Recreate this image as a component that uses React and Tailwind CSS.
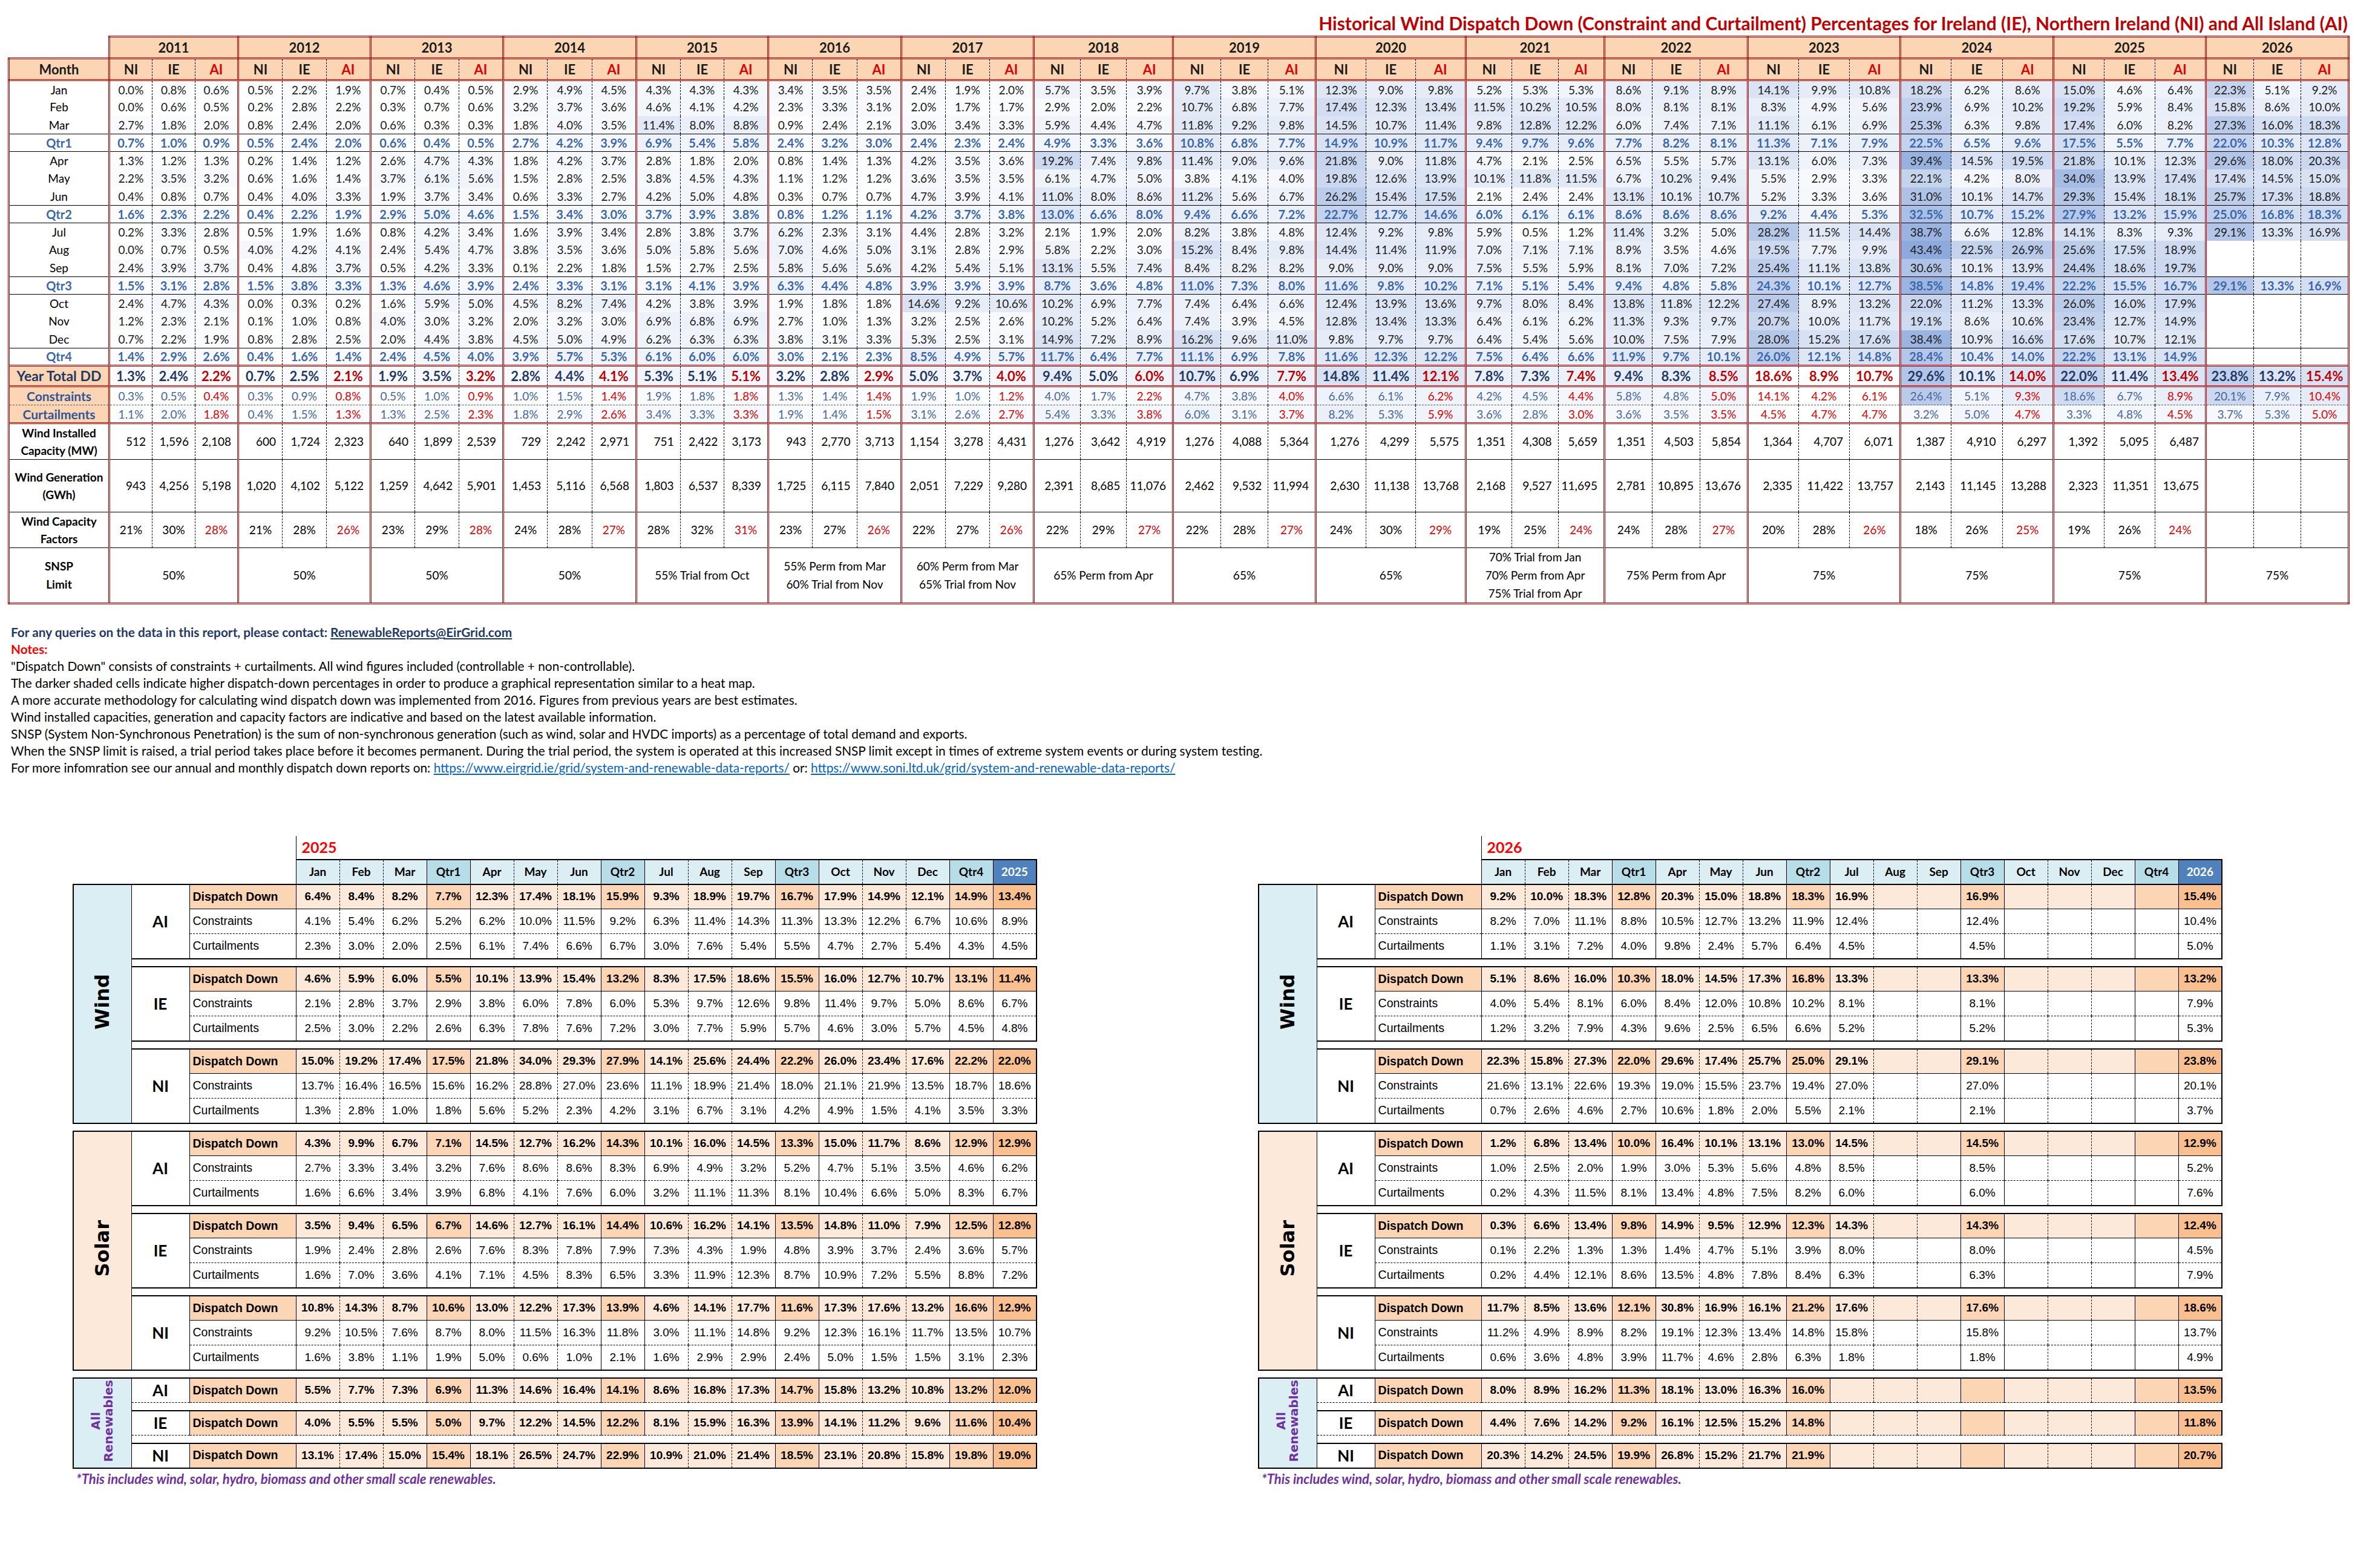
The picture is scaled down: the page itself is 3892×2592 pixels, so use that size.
import React from "react";

// top table: yearly dispatch-down history
const YEARS = [
  { y: 2011, w: "w-[213px]", v: "0.0 0.8 0.6|0.0 0.6 0.5|2.7 1.8 2.0|0.7 1.0 0.9|1.3 1.2 1.3|2.2 3.5 3.2|0.4 0.8 0.7|1.6 2.3 2.2|0.2 3.3 2.8|0.0 0.7 0.5|2.4 3.9 3.7|1.5 3.1 2.8|2.4 4.7 4.3|1.2 2.3 2.1|0.7 2.2 1.9|1.4 2.9 2.6|1.3 2.4 2.2|0.3 0.5 0.4|1.1 2.0 1.8", cap: "512 1,596 2,108", gen: "943 4,256 5,198", cf: "21 30 28", snsp: ["50%"] },
  { y: 2012, w: "w-[219px]", v: "0.5 2.2 1.9|0.2 2.8 2.2|0.8 2.4 2.0|0.5 2.4 2.0|0.2 1.4 1.2|0.6 1.6 1.4|0.4 4.0 3.3|0.4 2.2 1.9|0.5 1.9 1.6|4.0 4.2 4.1|0.4 4.8 3.7|1.5 3.8 3.3|0.0 0.3 0.2|0.1 1.0 0.8|0.8 2.8 2.5|0.4 1.6 1.4|0.7 2.5 2.1|0.3 0.9 0.8|0.4 1.5 1.3", cap: "600 1,724 2,323", gen: "1,020 4,102 5,122", cf: "21 28 26", snsp: ["50%"] },
  { y: 2013, w: "w-[219px]", v: "0.7 0.4 0.5|0.3 0.7 0.6|0.6 0.3 0.3|0.6 0.4 0.5|2.6 4.7 4.3|3.7 6.1 5.6|1.9 3.7 3.4|2.9 5.0 4.6|0.8 4.2 3.4|2.4 5.4 4.7|0.5 4.2 3.3|1.3 4.6 3.9|1.6 5.9 5.0|4.0 3.0 3.2|2.0 4.4 3.8|2.4 4.5 4.0|1.9 3.5 3.2|0.5 1.0 0.9|1.3 2.5 2.3", cap: "640 1,899 2,539", gen: "1,259 4,642 5,901", cf: "23 29 28", snsp: ["50%"] },
  { y: 2014, w: "w-[220px]", v: "2.9 4.9 4.5|3.2 3.7 3.6|1.8 4.0 3.5|2.7 4.2 3.9|1.8 4.2 3.7|1.5 2.8 2.5|0.6 3.3 2.7|1.5 3.4 3.0|1.6 3.9 3.4|3.8 3.5 3.6|0.1 2.2 1.8|2.4 3.3 3.1|4.5 8.2 7.4|2.0 3.2 3.0|4.5 5.0 4.9|3.9 5.7 5.3|2.8 4.4 4.1|1.0 1.5 1.4|1.8 2.9 2.6", cap: "729 2,242 2,971", gen: "1,453 5,116 6,568", cf: "24 28 27", snsp: ["50%"] },
  { y: 2015, w: "w-[218px]", v: "4.3 4.3 4.3|4.6 4.1 4.2|11.4 8.0 8.8|6.9 5.4 5.8|2.8 1.8 2.0|3.8 4.5 4.3|4.2 5.0 4.8|3.7 3.9 3.8|2.8 3.8 3.7|5.0 5.8 5.6|1.5 2.7 2.5|3.1 4.1 3.9|4.2 3.8 3.9|6.9 6.8 6.9|6.2 6.3 6.3|6.1 6.0 6.0|5.3 5.1 5.1|1.9 1.8 1.8|3.4 3.3 3.3", cap: "751 2,422 3,173", gen: "1,803 6,537 8,339", cf: "28 32 31", snsp: ["55% Trial from Oct"] },
  { y: 2016, w: "w-[220px]", v: "3.4 3.5 3.5|2.3 3.3 3.1|0.9 2.4 2.1|2.4 3.2 3.0|0.8 1.4 1.3|1.1 1.2 1.2|0.3 0.7 0.7|0.8 1.2 1.1|6.2 2.3 3.1|7.0 4.6 5.0|5.8 5.6 5.6|6.3 4.4 4.8|1.9 1.8 1.8|2.7 1.0 1.3|3.8 3.1 3.3|3.0 2.1 2.3|3.2 2.8 2.9|1.3 1.4 1.4|1.9 1.4 1.5", cap: "943 2,770 3,713", gen: "1,725 6,115 7,840", cf: "23 27 26", snsp: ["55% Perm from Mar", "60% Trial from Nov"] },
  { y: 2017, w: "w-[219px]", v: "2.4 1.9 2.0|2.0 1.7 1.7|3.0 3.4 3.3|2.4 2.3 2.4|4.2 3.5 3.6|3.6 3.5 3.5|4.7 3.9 4.1|4.2 3.7 3.8|4.4 2.8 3.2|3.1 2.8 2.9|4.2 5.4 5.1|3.9 3.9 3.9|14.6 9.2 10.6|3.2 2.5 2.6|5.3 2.5 3.1|8.5 4.9 5.7|5.0 3.7 4.0|1.9 1.0 1.2|3.1 2.6 2.7", cap: "1,154 3,278 4,431", gen: "2,051 7,229 9,280", cf: "22 27 26", snsp: ["60% Perm from Mar", "65% Trial from Nov"] },
  { y: 2018, w: "w-[230px]", v: "5.7 3.5 3.9|2.9 2.0 2.2|5.9 4.4 4.7|4.9 3.3 3.6|19.2 7.4 9.8|6.1 4.7 5.0|11.0 8.0 8.6|13.0 6.6 8.0|2.1 1.9 2.0|5.8 2.2 3.0|13.1 5.5 7.4|8.7 3.6 4.8|10.2 6.9 7.7|10.2 5.2 6.4|14.9 7.2 8.9|11.7 6.4 7.7|9.4 5.0 6.0|4.0 1.7 2.2|5.4 3.3 3.8", cap: "1,276 3,642 4,919", gen: "2,391 8,685 11,076", cf: "22 29 27", snsp: ["65% Perm from Apr"] },
  { y: 2019, w: "w-[236px]", v: "9.7 3.8 5.1|10.7 6.8 7.7|11.8 9.2 9.8|10.8 6.8 7.7|11.4 9.0 9.6|3.8 4.1 4.0|11.2 5.6 6.7|9.4 6.6 7.2|8.2 3.8 4.8|15.2 8.4 9.8|8.4 8.2 8.2|11.0 7.3 8.0|7.4 6.4 6.6|7.4 3.9 4.5|16.2 9.6 11.0|11.1 6.9 7.8|10.7 6.9 7.7|4.7 3.8 4.0|6.0 3.1 3.7", cap: "1,276 4,088 5,364", gen: "2,462 9,532 11,994", cf: "22 28 27", snsp: ["65%"] },
  { y: 2020, w: "w-[248px]", v: "12.3 9.0 9.8|17.4 12.3 13.4|14.5 10.7 11.4|14.9 10.9 11.7|21.8 9.0 11.8|19.8 12.6 13.9|26.2 15.4 17.5|22.7 12.7 14.6|12.4 9.2 9.8|14.4 11.4 11.9|9.0 9.0 9.0|11.6 9.8 10.2|12.4 13.9 13.6|12.8 13.4 13.3|9.8 9.7 9.7|11.6 12.3 12.2|14.8 11.4 12.1|6.6 6.1 6.2|8.2 5.3 5.9", cap: "1,276 4,299 5,575", gen: "2,630 11,138 13,768", cf: "24 30 29", snsp: ["65%"] },
  { y: 2021, w: "w-[229px]", v: "5.2 5.3 5.3|11.5 10.2 10.5|9.8 12.8 12.2|9.4 9.7 9.6|4.7 2.1 2.5|10.1 11.8 11.5|2.1 2.4 2.4|6.0 6.1 6.1|5.9 0.5 1.2|7.0 7.1 7.1|7.5 5.5 5.9|7.1 5.1 5.4|9.7 8.0 8.4|6.4 6.1 6.2|6.4 5.4 5.6|7.5 6.4 6.6|7.8 7.3 7.4|4.2 4.5 4.4|3.6 2.8 3.0", cap: "1,351 4,308 5,659", gen: "2,168 9,527 11,695", cf: "19 25 24", snsp: ["70% Trial from Jan", "70% Perm from Apr", "75% Trial from Apr"] },
  { y: 2022, w: "w-[237px]", v: "8.6 9.1 8.9|8.0 8.1 8.1|6.0 7.4 7.1|7.7 8.2 8.1|6.5 5.5 5.7|6.7 10.2 9.4|13.1 10.1 10.7|8.6 8.6 8.6|11.4 3.2 5.0|8.9 3.5 4.6|8.1 7.0 7.2|9.4 4.8 5.8|13.8 11.8 12.2|11.3 9.3 9.7|10.0 7.5 7.9|11.9 9.7 10.1|9.4 8.3 8.5|5.8 4.8 5.0|3.6 3.5 3.5", cap: "1,351 4,503 5,854", gen: "2,781 10,895 13,676", cf: "24 28 27", snsp: ["75% Perm from Apr"] },
  { y: 2023, w: "w-[252px]", red: true, v: "14.1 9.9 10.8|8.3 4.9 5.6|11.1 6.1 6.9|11.3 7.1 7.9|13.1 6.0 7.3|5.5 2.9 3.3|5.2 3.3 3.6|9.2 4.4 5.3|28.2 11.5 14.4|19.5 7.7 9.9|25.4 11.1 13.8|24.3 10.1 12.7|27.4 8.9 13.2|20.7 10.0 11.7|28.0 15.2 17.6|26.0 12.1 14.8|18.6 8.9 10.7|14.1 4.2 6.1|4.5 4.7 4.7", cap: "1,364 4,707 6,071", gen: "2,335 11,422 13,757", cf: "20 28 26", snsp: ["75%"] },
  { y: 2024, w: "w-[253px]", v: "18.2 6.2 8.6|23.9 6.9 10.2|25.3 6.3 9.8|22.5 6.5 9.6|39.4 14.5 19.5|22.1 4.2 8.0|31.0 10.1 14.7|32.5 10.7 15.2|38.7 6.6 12.8|43.4 22.5 26.9|30.6 10.1 13.9|38.5 14.8 19.4|22.0 11.2 13.3|19.1 8.6 10.6|38.4 10.9 16.6|28.4 10.4 14.0|29.6 10.1 14.0|26.4 5.1 9.3|3.2 5.0 4.7", cap: "1,387 4,910 6,297", gen: "2,143 11,145 13,288", cf: "18 26 25", snsp: ["75%"] },
  { y: 2025, w: "w-[252px]", v: "15.0 4.6 6.4|19.2 5.9 8.4|17.4 6.0 8.2|17.5 5.5 7.7|21.8 10.1 12.3|34.0 13.9 17.4|29.3 15.4 18.1|27.9 13.2 15.9|14.1 8.3 9.3|25.6 17.5 18.9|24.4 18.6 19.7|22.2 15.5 16.7|26.0 16.0 17.9|23.4 12.7 14.9|17.6 10.7 12.1|22.2 13.1 14.9|22.0 11.4 13.4|18.6 6.7 8.9|3.3 4.8 4.5", cap: "1,392 5,095 6,487", gen: "2,323 11,351 13,675", cf: "19 26 24", snsp: ["75%"] },
  { y: 2026, w: "w-[236px]", v: "22.3 5.1 9.2|15.8 8.6 10.0|27.3 16.0 18.3|22.0 10.3 12.8|29.6 18.0 20.3|17.4 14.5 15.0|25.7 17.3 18.8|25.0 16.8 18.3|29.1 13.3 16.9|- - -|- - -|29.1 13.3 16.9|- - -|- - -|- - -|- - -|23.8 13.2 15.4|20.1 7.9 10.4|3.7 5.3 5.0", cap: "- - -", gen: "- - -", cf: "- - -", snsp: ["75%"] },
];

const ROWS = [
  ["Jan", "m"], ["Feb", "m"], ["Mar", "m"], ["Qtr1", "q"],
  ["Apr", "m"], ["May", "m"], ["Jun", "m"], ["Qtr2", "q"],
  ["Jul", "m"], ["Aug", "m"], ["Sep", "m"], ["Qtr3", "q"],
  ["Oct", "m"], ["Nov", "m"], ["Dec", "m"], ["Qtr4", "q"],
  ["Year Total DD", "yt"], ["Constraints", "c"], ["Curtailments", "cu"],
];

const RD_T = "[border-top:3px_double_#c00000]";
const RD_B = "[border-bottom:3px_double_#c00000]";
const RD_L = "[border-left:3px_double_#c00000]";
const RD_R = "[border-right:3px_double_#c00000]";
const BK_T = "[border-top:1px_solid_#000]";
const DS_T = "[border-top:1px_dashed_#555]";
const DS_L = "[border-left:1px_dashed_#000]";

function heat(v) {
  const t = Math.min(Math.max(v / 43.4, 0), 1);
  const r = Math.round(255 - (255 - 142) * t);
  const g = Math.round(255 - (255 - 170) * t);
  const b = Math.round(255 - (255 - 220) * t);
  return `rgb(${r},${g},${b})`;
}

function rowTop(i, kind) {
  if (i === 0) return RD_T;
  if (kind === "q" || i === 4 || i === 8 || i === 12) return BK_T;
  if (kind === "yt" || kind === "c") return RD_T;
  if (kind === "cu") return DS_T;
  return "";
}

const ROW_H = { m: "h-[29.5px]", q: "h-[29.5px]", yt: "h-[34px]", c: "h-[31px]", cu: "h-[30px]" };

const LABEL_CLS = {
  m: "text-[19px] text-black",
  q: "text-[20px] font-bold text-[#3a66aa]",
  yt: "text-[23px] font-bold text-[#1f3864] bg-[#fcd5b4]",
  c: "text-[21px] font-bold text-[#2f5597] bg-[#fcd5b4]",
  cu: "text-[21px] font-bold text-[#2f5597] bg-[#fcd5b4]",
};

function valueCls(kind, j, red) {
  if (kind === "m") return "text-[19px] text-[#1a1a1a]";
  if (kind === "q") return "text-[20px] font-bold text-[#3a66aa]";
  if (kind === "yt") return `text-[22px] font-bold ${j === 2 || red ? "text-[#c00000]" : "text-[#1f3864]"}`;
  return `text-[19px] ${j === 2 || red ? "text-[#e00000]" : "text-[#4566a0]"}`;
}

function HistoryTable() {
  const years = YEARS.map((yr) => ({ ...yr, rows: yr.v.split("|").map((r) => r.split(" ")) }));
  const subL = (j) => (j === 0 ? RD_L : DS_L);
  const lastR = (yi, j) => (yi === YEARS.length - 1 && j === 2 ? RD_R : "");

  const extra = [
    { key: "cap", label: ["Wind Installed", "Capacity (MW)"], h: "h-[59px]", top: RD_T, align: "text-right pr-[10px]" },
    { key: "gen", label: ["Wind Generation", "(GWh)"], h: "h-[87px]", top: BK_T, align: "text-right pr-[10px]" },
    { key: "cf", label: ["Wind Capacity", "Factors"], h: "h-[58px]", top: BK_T, align: "text-center", pct: true },
  ];

  return (
    <table className="table-fixed border-collapse w-[3867px]">
      <thead>
        <tr className="h-[35px]">
          <th className="w-[166px]" />
          {years.map((yr) => (
            <th
              key={yr.y}
              colSpan={3}
              className={`${yr.w} bg-[#fcd5b4] [border:3px_double_#c00000] text-[22px] font-bold text-[#1a1a1a]`}
            >
              {yr.y}
            </th>
          ))}
        </tr>
        <tr className="h-[34px]">
          <th className="bg-[#fcd5b4] [border:3px_double_#c00000] text-[22px] font-bold text-[#1a1a1a]">Month</th>
          {years.map((yr, yi) =>
            ["NI", "IE", "AI"].map((h, j) => (
              <th
                key={`${yr.y}-${h}`}
                className={`bg-[#fcd5b4] ${RD_T} ${RD_B} ${subL(j)} ${lastR(yi, j)} text-[22px] font-bold ${j === 2 ? "text-[#e00000]" : "text-[#1a1a1a]"}`}
              >
                {h}
              </th>
            ))
          )}
        </tr>
      </thead>
      <tbody>
        {ROWS.map(([label, kind], i) => (
          <tr key={label} className={ROW_H[kind]}>
            <td className={`${rowTop(i, kind)} ${RD_L} text-center leading-none ${LABEL_CLS[kind]}`}>{label}</td>
            {years.map((yr, yi) =>
              yr.rows[i].map((v, j) => {
                const empty = v === "-";
                const shade = !empty && !(yr.red && i >= 16);
                return (
                  <td
                    key={`${yr.y}-${j}`}
                    className={`${rowTop(i, kind)} ${subL(j)} ${lastR(yi, j)} text-center leading-none ${valueCls(kind, j, yr.red)}`}
                    style={shade ? { backgroundColor: heat(parseFloat(v)) } : undefined}
                  >
                    {empty ? "" : `${v}%`}
                  </td>
                );
              })
            )}
          </tr>
        ))}
        {extra.map((row) => (
          <tr key={row.key} className={row.h}>
            <td className={`${row.top} ${RD_L} text-center text-[19px] font-bold text-black leading-[29px]`}>
              {row.label[0]}
              <br />
              {row.label[1]}
            </td>
            {years.map((yr, yi) =>
              yr[row.key].split(" ").map((v, j) => (
                <td
                  key={`${yr.y}-${j}`}
                  className={`${row.top} ${subL(j)} ${lastR(yi, j)} ${row.align} text-[19px] ${row.pct && j === 2 ? "text-[#e00000]" : "text-black"}`}
                >
                  {v === "-" ? "" : row.pct ? `${v}%` : v}
                </td>
              ))
            )}
          </tr>
        ))}
        <tr className="h-[92px]">
          <td className={`${BK_T} ${RD_L} ${RD_B} text-center text-[19px] font-bold text-black leading-[30px]`}>
            SNSP
            <br />
            Limit
          </td>
          {years.map((yr, yi) => (
            <td
              key={yr.y}
              colSpan={3}
              className={`${BK_T} ${RD_L} ${RD_B} ${yi === YEARS.length - 1 ? RD_R : ""} text-center text-[19px] text-black leading-[30px]`}
            >
              {yr.snsp.map((s) => (
                <div key={s}>{s}</div>
              ))}
            </td>
          ))}
        </tr>
      </tbody>
    </table>
  );
}

// bottom tables: monthly breakdown by technology
const COLS = ["Jan", "Feb", "Mar", "Qtr1", "Apr", "May", "Jun", "Qtr2", "Jul", "Aug", "Sep", "Qtr3", "Oct", "Nov", "Dec", "Qtr4"];
const colType = (i) => (i === 16 ? "y" : i % 4 === 3 ? "q" : "m");
const leftB = (i) =>
  i === 0 || colType(i) !== "m" || colType(i - 1) !== "m" ? "[border-left:1px_solid_#000]" : "[border-left:1px_dashed_#000]";
const rightB = (i) => (i === 16 ? "[border-right:2px_solid_#000]" : "");
const HEAD_BG = { m: "bg-[#daeef3] text-black", q: "bg-[#b7dee8] text-black", y: "bg-[#4f81bd] text-white" };
const DD_BG = { m: "bg-[#fde9d9]", q: "bg-[#fcd5b4]", y: "bg-[#fabf8f]" };

const T2025 = [
  {
    name: "Wind",
    bg: "bg-[#daeef3]",
    regions: [
      { r: "AI", rows: [
        ["Dispatch Down", "6.4 8.4 8.2 7.7 12.3 17.4 18.1 15.9 9.3 18.9 19.7 16.7 17.9 14.9 12.1 14.9 13.4"],
        ["Constraints", "4.1 5.4 6.2 5.2 6.2 10.0 11.5 9.2 6.3 11.4 14.3 11.3 13.3 12.2 6.7 10.6 8.9"],
        ["Curtailments", "2.3 3.0 2.0 2.5 6.1 7.4 6.6 6.7 3.0 7.6 5.4 5.5 4.7 2.7 5.4 4.3 4.5"],
      ] },
      { r: "IE", rows: [
        ["Dispatch Down", "4.6 5.9 6.0 5.5 10.1 13.9 15.4 13.2 8.3 17.5 18.6 15.5 16.0 12.7 10.7 13.1 11.4"],
        ["Constraints", "2.1 2.8 3.7 2.9 3.8 6.0 7.8 6.0 5.3 9.7 12.6 9.8 11.4 9.7 5.0 8.6 6.7"],
        ["Curtailments", "2.5 3.0 2.2 2.6 6.3 7.8 7.6 7.2 3.0 7.7 5.9 5.7 4.6 3.0 5.7 4.5 4.8"],
      ] },
      { r: "NI", rows: [
        ["Dispatch Down", "15.0 19.2 17.4 17.5 21.8 34.0 29.3 27.9 14.1 25.6 24.4 22.2 26.0 23.4 17.6 22.2 22.0"],
        ["Constraints", "13.7 16.4 16.5 15.6 16.2 28.8 27.0 23.6 11.1 18.9 21.4 18.0 21.1 21.9 13.5 18.7 18.6"],
        ["Curtailments", "1.3 2.8 1.0 1.8 5.6 5.2 2.3 4.2 3.1 6.7 3.1 4.2 4.9 1.5 4.1 3.5 3.3"],
      ] },
    ],
  },
  {
    name: "Solar",
    bg: "bg-[#fde9d9]",
    regions: [
      { r: "AI", rows: [
        ["Dispatch Down", "4.3 9.9 6.7 7.1 14.5 12.7 16.2 14.3 10.1 16.0 14.5 13.3 15.0 11.7 8.6 12.9 12.9"],
        ["Constraints", "2.7 3.3 3.4 3.2 7.6 8.6 8.6 8.3 6.9 4.9 3.2 5.2 4.7 5.1 3.5 4.6 6.2"],
        ["Curtailments", "1.6 6.6 3.4 3.9 6.8 4.1 7.6 6.0 3.2 11.1 11.3 8.1 10.4 6.6 5.0 8.3 6.7"],
      ] },
      { r: "IE", rows: [
        ["Dispatch Down", "3.5 9.4 6.5 6.7 14.6 12.7 16.1 14.4 10.6 16.2 14.1 13.5 14.8 11.0 7.9 12.5 12.8"],
        ["Constraints", "1.9 2.4 2.8 2.6 7.6 8.3 7.8 7.9 7.3 4.3 1.9 4.8 3.9 3.7 2.4 3.6 5.7"],
        ["Curtailments", "1.6 7.0 3.6 4.1 7.1 4.5 8.3 6.5 3.3 11.9 12.3 8.7 10.9 7.2 5.5 8.8 7.2"],
      ] },
      { r: "NI", rows: [
        ["Dispatch Down", "10.8 14.3 8.7 10.6 13.0 12.2 17.3 13.9 4.6 14.1 17.7 11.6 17.3 17.6 13.2 16.6 12.9"],
        ["Constraints", "9.2 10.5 7.6 8.7 8.0 11.5 16.3 11.8 3.0 11.1 14.8 9.2 12.3 16.1 11.7 13.5 10.7"],
        ["Curtailments", "1.6 3.8 1.1 1.9 5.0 0.6 1.0 2.1 1.6 2.9 2.9 2.4 5.0 1.5 1.5 3.1 2.3"],
      ] },
    ],
  },
  {
    name: "All Renewables",
    bg: "bg-[#daeef3]",
    single: true,
    regions: [
      { r: "AI", rows: [["Dispatch Down", "5.5 7.7 7.3 6.9 11.3 14.6 16.4 14.1 8.6 16.8 17.3 14.7 15.8 13.2 10.8 13.2 12.0"]] },
      { r: "IE", rows: [["Dispatch Down", "4.0 5.5 5.5 5.0 9.7 12.2 14.5 12.2 8.1 15.9 16.3 13.9 14.1 11.2 9.6 11.6 10.4"]] },
      { r: "NI", rows: [["Dispatch Down", "13.1 17.4 15.0 15.4 18.1 26.5 24.7 22.9 10.9 21.0 21.4 18.5 23.1 20.8 15.8 19.8 19.0"]] },
    ],
  },
];

const T2026 = [
  {
    name: "Wind",
    bg: "bg-[#daeef3]",
    regions: [
      { r: "AI", rows: [
        ["Dispatch Down", "9.2 10.0 18.3 12.8 20.3 15.0 18.8 18.3 16.9 - - 16.9 - - - - 15.4"],
        ["Constraints", "8.2 7.0 11.1 8.8 10.5 12.7 13.2 11.9 12.4 - - 12.4 - - - - 10.4"],
        ["Curtailments", "1.1 3.1 7.2 4.0 9.8 2.4 5.7 6.4 4.5 - - 4.5 - - - - 5.0"],
      ] },
      { r: "IE", rows: [
        ["Dispatch Down", "5.1 8.6 16.0 10.3 18.0 14.5 17.3 16.8 13.3 - - 13.3 - - - - 13.2"],
        ["Constraints", "4.0 5.4 8.1 6.0 8.4 12.0 10.8 10.2 8.1 - - 8.1 - - - - 7.9"],
        ["Curtailments", "1.2 3.2 7.9 4.3 9.6 2.5 6.5 6.6 5.2 - - 5.2 - - - - 5.3"],
      ] },
      { r: "NI", rows: [
        ["Dispatch Down", "22.3 15.8 27.3 22.0 29.6 17.4 25.7 25.0 29.1 - - 29.1 - - - - 23.8"],
        ["Constraints", "21.6 13.1 22.6 19.3 19.0 15.5 23.7 19.4 27.0 - - 27.0 - - - - 20.1"],
        ["Curtailments", "0.7 2.6 4.6 2.7 10.6 1.8 2.0 5.5 2.1 - - 2.1 - - - - 3.7"],
      ] },
    ],
  },
  {
    name: "Solar",
    bg: "bg-[#fde9d9]",
    regions: [
      { r: "AI", rows: [
        ["Dispatch Down", "1.2 6.8 13.4 10.0 16.4 10.1 13.1 13.0 14.5 - - 14.5 - - - - 12.9"],
        ["Constraints", "1.0 2.5 2.0 1.9 3.0 5.3 5.6 4.8 8.5 - - 8.5 - - - - 5.2"],
        ["Curtailments", "0.2 4.3 11.5 8.1 13.4 4.8 7.5 8.2 6.0 - - 6.0 - - - - 7.6"],
      ] },
      { r: "IE", rows: [
        ["Dispatch Down", "0.3 6.6 13.4 9.8 14.9 9.5 12.9 12.3 14.3 - - 14.3 - - - - 12.4"],
        ["Constraints", "0.1 2.2 1.3 1.3 1.4 4.7 5.1 3.9 8.0 - - 8.0 - - - - 4.5"],
        ["Curtailments", "0.2 4.4 12.1 8.6 13.5 4.8 7.8 8.4 6.3 - - 6.3 - - - - 7.9"],
      ] },
      { r: "NI", rows: [
        ["Dispatch Down", "11.7 8.5 13.6 12.1 30.8 16.9 16.1 21.2 17.6 - - 17.6 - - - - 18.6"],
        ["Constraints", "11.2 4.9 8.9 8.2 19.1 12.3 13.4 14.8 15.8 - - 15.8 - - - - 13.7"],
        ["Curtailments", "0.6 3.6 4.8 3.9 11.7 4.6 2.8 6.3 1.8 - - 1.8 - - - - 4.9"],
      ] },
    ],
  },
  {
    name: "All Renewables",
    bg: "bg-[#daeef3]",
    single: true,
    regions: [
      { r: "AI", rows: [["Dispatch Down", "8.0 8.9 16.2 11.3 18.1 13.0 16.3 16.0 - - - - - - - - 13.5"]] },
      { r: "IE", rows: [["Dispatch Down", "4.4 7.6 14.2 9.2 16.1 12.5 15.2 14.8 - - - - - - - - 11.8"]] },
      { r: "NI", rows: [["Dispatch Down", "20.3 14.2 24.5 19.9 26.8 15.2 21.7 21.9 - - - - - - - - 20.7"]] },
    ],
  },
];

function SectionLabel({ name }) {
  if (name === "All Renewables") {
    return (
      <div className="inline-block [writing-mode:vertical-rl] rotate-180 text-center font-['DejaVu_Sans',sans-serif] font-bold text-[20px] leading-[21px] text-[#7030a0]">
        All
        <br />
        Renewables
      </div>
    );
  }
  return (
    <div className="inline-block [writing-mode:vertical-rl] rotate-180 font-['DejaVu_Sans',sans-serif] font-bold text-[32px] leading-none text-black">
      {name}
    </div>
  );
}

function sectionRows(sec, si) {
  const out = [];
  const total = sec.regions.reduce((a, reg) => a + reg.rows.length, 0) + sec.regions.length - 1;
  sec.regions.forEach((reg, ri) => {
    if (ri > 0) {
      out.push(
        <tr key={`gap-${si}-${ri}`} className="h-[13px]">
          <td colSpan={19} />
        </tr>
      );
    }
    const lastRegion = ri === sec.regions.length - 1;
    reg.rows.forEach(([metric, vals], k) => {
      const first = k === 0;
      const last = k === reg.rows.length - 1;
      const isDD = metric === "Dispatch Down";
      const bt = first ? "[border-top:2px_solid_#000]" : "";
      let bb;
      if (last) bb = sec.single && !lastRegion ? "[border-bottom:1px_dashed_#000]" : "[border-bottom:2px_solid_#000]";
      else bb = isDD ? "[border-bottom:1px_solid_#000]" : "[border-bottom:1px_dashed_#000]";
      const regionBottom = sec.single && !lastRegion ? "[border-bottom:1px_dashed_#000]" : "[border-bottom:2px_solid_#000]";
      out.push(
        <tr key={`${si}-${ri}-${k}`} className="h-[41px]">
          {ri === 0 && k === 0 && (
            <td
              rowSpan={total}
              className={`${sec.bg} [border-top:2px_solid_#000] [border-bottom:2px_solid_#000] [border-left:2px_solid_#000] [border-right:1px_solid_#000] text-center align-middle`}
            >
              <SectionLabel name={sec.name} />
            </td>
          )}
          {k === 0 && (
            <td
              rowSpan={reg.rows.length}
              className={`[border-top:2px_solid_#000] ${regionBottom} [border-left:1px_solid_#000] bg-white text-center font-['Lato',sans-serif] font-bold text-[26px] text-black`}
            >
              {reg.r}
            </td>
          )}
          <td
            className={`${bt} ${bb} [border-left:1px_solid_#000] pl-[5px] text-left whitespace-nowrap text-[19.5px] text-black ${isDD ? "font-bold bg-[#fcd5b4]" : "bg-white"}`}
          >
            {metric}
          </td>
          {vals.split(" ").map((v, i) => (
            <td
              key={i}
              className={`${bt} ${bb} ${leftB(i)} ${rightB(i)} text-center whitespace-nowrap text-[19px] text-black ${isDD ? `font-bold ${DD_BG[colType(i)]}` : "bg-white"}`}
            >
              {v === "-" ? "" : `${v}%`}
            </td>
          ))}
        </tr>
      );
    });
  });
  return out;
}

function MonthlyTable({ year, sections }) {
  const cols = [...COLS, String(year)];
  return (
    <div className="flex flex-col">
      <table className="table-fixed border-collapse w-[1592px] font-['Liberation_Sans',Arial,sans-serif]">
        <colgroup>
          <col className="w-[96px]" />
          <col className="w-[96px]" />
          <col className="w-[176px]" />
          {cols.map((c) => (
            <col key={c} className="w-[72px]" />
          ))}
        </colgroup>
        <tbody>
          <tr className="h-[38px]">
            <td colSpan={3} />
            <td colSpan={17} className="[border-left:1px_solid_#000] pl-[9px] text-left font-['Lato',sans-serif] font-bold text-[25px] text-[#ff0000]">
              {year}
            </td>
          </tr>
          <tr className="h-[41px]">
            <td colSpan={3} />
            {cols.map((c, i) => (
              <td
                key={c}
                className={`[border-top:2px_solid_#000] ${leftB(i)} ${rightB(i)} ${HEAD_BG[colType(i)]} text-center font-['Lato',sans-serif] font-bold text-[19px]`}
              >
                {c}
              </td>
            ))}
          </tr>
          {sections.map((sec, si) => [
            si > 0 && (
              <tr key={`sgap-${si}`} className="h-[13px]">
                <td colSpan={20} />
              </tr>
            ),
            ...sectionRows(sec, si),
          ])}
        </tbody>
      </table>
      <div className="pl-[6px] mt-[2px] font-['Lato',sans-serif] italic font-bold text-[22px] leading-[30px] text-[#7030a0]">
        *This includes wind, solar, hydro, biomass and other small scale renewables.
      </div>
    </div>
  );
}

function Notes() {
  const lines = [
    "\"Dispatch Down\" consists of constraints + curtailments. All wind figures included (controllable + non-controllable).",
    "The darker shaded cells indicate higher dispatch-down percentages in order to produce a graphical representation similar to a heat map.",
    "A more accurate methodology for calculating wind dispatch down was implemented from 2016. Figures from previous years are best estimates.",
    "Wind installed capacities, generation and capacity factors are indicative and based on the latest available information.",
    "SNSP (System Non-Synchronous Penetration) is the sum of non-synchronous generation (such as wind, solar and HVDC imports) as a percentage of total demand and exports.",
    "When the SNSP limit is raised, a trial period takes place before it becomes permanent. During the trial period, the system is operated at this increased SNSP limit except in times of extreme system events or during system testing.",
  ];
  return (
    <div className="pl-[18px] mt-[32px] text-[20.8px] leading-[28px] text-black whitespace-nowrap">
      <div className="font-bold text-[#1f3864]">
        For any queries on the data in this report, please contact: <span className="underline">RenewableReports@EirGrid.com</span>
      </div>
      <div className="font-bold text-[#ff0000]">Notes:</div>
      {lines.map((l) => (
        <div key={l}>{l}</div>
      ))}
      <div>
        For more infomration see our annual and monthly dispatch down reports on:{" "}
        <span className="underline text-[#0563c1]">https://www.eirgrid.ie/grid/system-and-renewable-data-reports/</span>
        {"  "}or:{" "}
        <span className="underline text-[#0563c1]">https://www.soni.ltd.uk/grid/system-and-renewable-data-reports/</span>
      </div>
    </div>
  );
}

export default function App() {
  return (
    <div className="w-[3892px] h-[2592px] bg-white overflow-hidden font-['Lato',sans-serif]">
      {/* Title */}
      <div className="w-[3880px] h-[59px] flex items-end justify-end pb-[2px]">
        <h1 className="text-[30px] leading-[38px] font-bold text-[#c00000]">
          Historical Wind Dispatch Down (Constraint and Curtailment) Percentages for Ireland (IE), Northern Ireland (NI) and All Island (AI)
        </h1>
      </div>

      <div className="pl-[13px]">
        <HistoryTable />
      </div>

      <Notes />

      {/* Monthly tables */}
      <div className="flex pl-[120px] gap-[365px] mt-[99px]">
        <MonthlyTable year={2025} sections={T2025} />
        <MonthlyTable year={2026} sections={T2026} />
      </div>
    </div>
  );
}
